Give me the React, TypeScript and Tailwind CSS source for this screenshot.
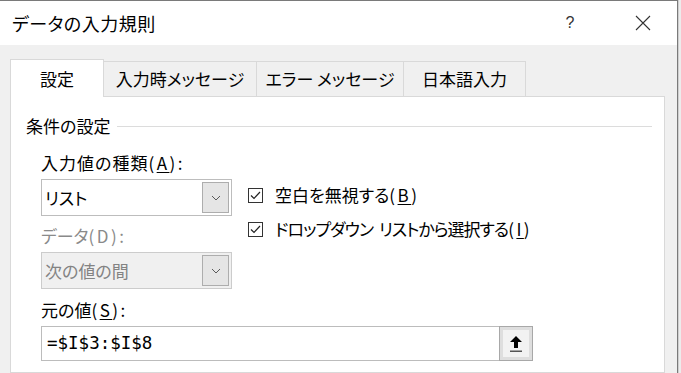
import React from "react";

const JP = "font-['Noto_Sans_CJK_JP','Noto_Sans',sans-serif] [font-feature-settings:'palt']";

function Chevron() {
  return (
    <svg width="10" height="6" viewBox="0 0 10 6" fill="none">
      <path d="M1 1 L5 5 L9 1" stroke="#5a5a5a" strokeWidth="1" />
    </svg>
  );
}

// Access-key hint like "(A)"; the Windows UI font sets these wider.
function Key({ k, u = true }: { k: string; u?: boolean }) {
  return (
    <span className="tracking-[2.5px]">
      (<span className={u ? "underline underline-offset-2" : ""}>{k}</span>)
    </span>
  );
}

function Select({ value, disabled }: { value: string; disabled?: boolean }) {
  return (
    <div
      className={`mt-1 h-[37px] w-[191px] border flex items-center pl-[3px] pr-[2px] ${
        disabled ? "bg-[#f0f0f0] border-[#cccccc] text-[#838383]" : "bg-white border-[#bdbdbd] text-black"
      }`}
    >
      <span className="flex-1 leading-none">{value}</span>
      <div className="w-[27px] h-[31px] bg-[#e5e5e5] border border-[#adadad] flex items-center justify-center">
        <Chevron />
      </div>
    </div>
  );
}

function Check({ children }: { children: React.ReactNode }) {
  return (
    <div className="h-[30px] flex items-center gap-[12px]">
      <div className="w-[15px] h-[15px] border border-[#333333] bg-white flex items-center justify-center">
        <svg width="11" height="9" viewBox="0 0 11 9" fill="none">
          <path d="M1 4.5 L4 7.5 L10 1" stroke="#222" strokeWidth="1.2" />
        </svg>
      </div>
      <span className="whitespace-nowrap">{children}</span>
    </div>
  );
}

export default function App() {
  return (
    <div className={`w-[681px] h-[373px] overflow-hidden flex bg-[#e6e6e6] text-[17px] text-black ${JP}`}>
      <div className="w-[678px] h-full flex flex-col border-t border-r border-[#7a7a7a]">
        {/* Title bar */}
        <div className="h-[44px] bg-white flex items-center shrink-0">
          <span className="pl-[12px] flex-1 text-[18px] tracking-[0.5px]">データの入力規則</span>
          <span className="w-[20px] text-center text-[#333] mr-[55px] font-['Liberation_Sans',sans-serif] text-[16px]">?</span>
          <svg width="16" height="16" viewBox="0 0 16 16" className="mr-[26px]">
            <path d="M1 1 L15 15 M15 1 L1 15" stroke="#333" strokeWidth="1.1" />
          </svg>
        </div>

        {/* Body */}
        <div className="flex-1 bg-[#f0f0f0] pl-[10px] pr-[12px] pt-[14px] flex flex-col">
          {/* Tabs */}
          <div className="flex items-end h-[37px] shrink-0">
            <div className="relative z-10 -mb-px h-[38px] w-[94px] bg-white border border-b-0 border-[#d9d9d9] flex items-center justify-center">
              設定
            </div>
            <div className="h-[35px] w-[153px] border-t border-r border-[#d9d9d9] flex items-center justify-center">
              入力時メッセージ
            </div>
            <div className="h-[35px] w-[147px] border-t border-r border-[#d9d9d9] flex items-center justify-center">
              エラー メッセージ
            </div>
            <div className="h-[35px] w-[122px] border-t border-r border-[#d9d9d9] flex items-center justify-center">
              日本語入力
            </div>
          </div>

          {/* Panel */}
          <div className="flex-1 bg-white border border-[#d9d9d9] pl-[15px]">
            <div className="mt-[17px] h-6 flex items-center">
              <span className="leading-6">条件の設定</span>
              <div className="ml-[7px] mr-[12px] flex-1 h-px bg-[#dcdcdc]" />
            </div>

            <div className="pl-[15px] mt-[13px]">
              <div className="flex">
                <div className="w-[191px]">
                  <div className="h-6 leading-6 whitespace-nowrap">
                    <span className="tracking-[1px]">入力値の種類</span>
                    <Key k="A" />:
                  </div>
                  <Select value="リスト" />
                  <div className="mt-2 h-6 leading-6 text-[#8a8a8a] whitespace-nowrap">
                    データ<Key k="D" u={false} />:
                  </div>
                  <Select value="次の値の間" disabled />
                </div>
                <div className="ml-[16px] mt-[29px] flex flex-col gap-1">
                  <Check>
                    空白を無視する<Key k="B" />
                  </Check>
                  <Check>
                    <span className="tracking-[-1px]">ドロップダウン</span>
                    <span className="ml-[6px] tracking-[-1px]">リストから選択する</span>
                    <Key k="I" />
                  </Check>
                </div>
              </div>

              <div className="mt-[9px] h-6 leading-6">
                元の値<Key k="S" />:
              </div>
              <div className="mt-1 h-[35px] w-[492px] border border-[#bcbcbc] bg-white flex items-center">
                <span className="flex-1 pl-[5px] font-['DejaVu_Sans_Mono',monospace] text-[17.5px] leading-none">
                  =$I$3:$I$8
                </span>
                <div className="w-[34px] h-[35px] -mr-px border border-[#a8a8a8] bg-[#dedede] flex items-center justify-center">
                  <div className="w-[26px] h-[27px] bg-[#f2f2f2] flex items-center justify-center">
                    <svg width="14" height="18" viewBox="0 0 14 18">
                      <path d="M7 1 L13 7 L9 7 L9 13 L5 13 L5 7 L1 7 Z" fill="#000" />
                      <rect x="1" y="15.5" width="12" height="1.5" fill="#555" />
                    </svg>
                  </div>
                </div>
              </div>
            </div>
          </div>
        </div>
      </div>
      <div className="flex-1 bg-[#ececec] border-l border-[#cfcfcf]" />
    </div>
  );
}
